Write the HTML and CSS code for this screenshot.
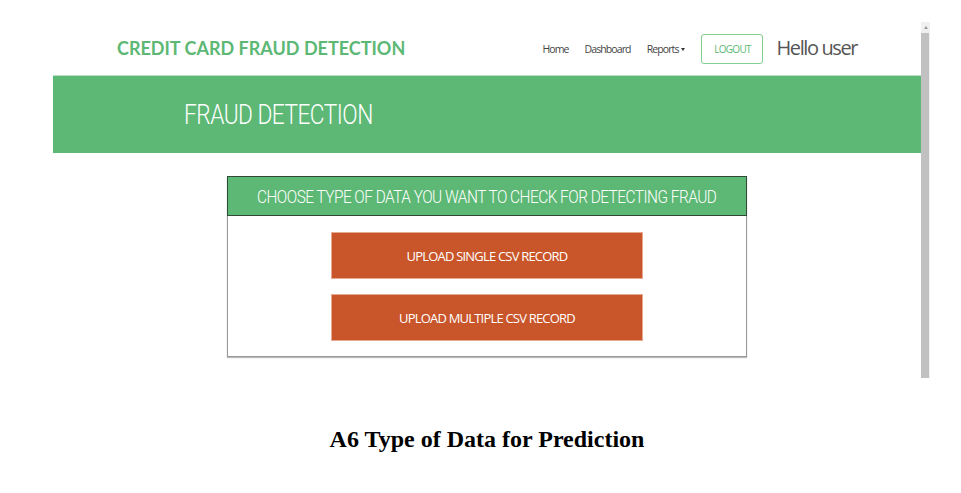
FILE: index.html
```html
<!DOCTYPE html>
<html>
<head>
<meta charset="utf-8">
<link rel="stylesheet" href="styles.css">
</head>
<body>
<div class="page">
  <div class="window">
    <div class="screen">
      <nav class="nav">
        <div class="brand">CREDIT CARD FRAUD DETECTION</div>
        <div class="menu">
          <a class="link">Home</a>
          <a class="link">Dashboard</a>
          <a class="link">Reports<span class="caret"></span></a>
          <button class="logout">LOGOUT</button>
          <span class="hello">Hello user</span>
        </div>
      </nav>
      <div class="band">
        <h1 class="band-title">FRAUD DETECTION</h1>
      </div>
      <div class="content">
        <div class="box">
          <div class="box-head"><span class="box-head-text">CHOOSE TYPE OF DATA YOU WANT TO CHECK FOR DETECTING FRAUD</span></div>
          <div class="box-body">
            <button class="upload">UPLOAD SINGLE CSV RECORD</button>
            <button class="upload">UPLOAD MULTIPLE CSV RECORD</button>
          </div>
        </div>
      </div>
    </div>
    <div class="scrollbar">
      <div class="arrow"><span class="arrow-tri"></span></div>
      <div class="thumb"></div>
    </div>
  </div>
  <p class="caption">A6 Type of Data for Prediction</p>
</div>
</body>
</html>
```
FILE: styles.css
```css
* { box-sizing: border-box; }
html, body { margin: 0; background: #fff; }
.page { padding: 22px 0 0 53px; width: 961px; height: 493px; }
.window { display: flex; height: 356px; }
.screen { width: 868px; height: 356px; display: flex; flex-direction: column; background: #fff; }
.nav { height: 53px; display: flex; align-items: center; justify-content: space-between; padding: 0 64px 0 64px; }
.brand { font-family: "Lato", sans-serif; font-weight: 700; font-size: 18px; color: #5cb874; margin-top: -2px; }
.menu { display: flex; align-items: center; }
.link { font-family: "Open Sans", sans-serif; font-size: 10.5px; color: #444; margin-right: 16px; letter-spacing: -0.9px; }
.caret { display: inline-block; width: 0; height: 0; border-left: 2.5px solid transparent; border-right: 2.5px solid transparent; border-top: 3px solid #333; vertical-align: middle; margin-left: 3px; }
.logout { width: 62px; height: 30px; border: 1.5px solid #7fd08f; border-radius: 3px; background: #fff; color: #5cb874; font-family: "Open Sans", sans-serif; font-size: 10px; letter-spacing: -0.7px; padding: 0; margin-right: 13px; }
.hello { font-family: "Open Sans", sans-serif; font-size: 20px; color: #555; letter-spacing: -1.4px; margin-top: -3px; }
.band { height: 78px; background: #5cb874; border-top: 1px solid #b7e1c1; display: flex; align-items: center; padding-left: 131px; }
.band-title { margin: 0; font-family: "Roboto", sans-serif; font-weight: 300; font-size: 27px; color: #fff; letter-spacing: -0.6px; transform: scaleX(0.84); transform-origin: left center; white-space: nowrap; }
.content { flex: 1; padding: 23px 0 0 174px; }
.box { width: 520px; height: 181px; border: 1px solid #999; border-top: none; box-shadow: 0 1px 1px #bbb; }
.box-head { height: 40px; background: #5cb874; border: 1px solid #2f4a36; margin: 0 -1px; display: flex; align-items: center; justify-content: center; }
.box-head-text { font-family: "Roboto", sans-serif; font-weight: 300; font-size: 18px; color: #fff; letter-spacing: -0.6px; white-space: nowrap; transform: scaleX(0.855); }
.box-body { display: flex; flex-direction: column; align-items: center; gap: 15px; padding-top: 16px; }
.upload { width: 312px; height: 47px; background: #c9552a; border: 1px solid #e7a98f; color: #fff; font-family: "Open Sans", sans-serif; font-size: 13px; letter-spacing: -0.8px; padding: 0; }
.scrollbar { width: 9px; display: flex; flex-direction: column; background: #f0f0f0; }
.arrow { height: 11px; display: flex; align-items: center; justify-content: center; background: #f0f0f0; }
.arrow-tri { width: 0; height: 0; border-left: 2.5px solid transparent; border-right: 2.5px solid transparent; border-bottom: 3px solid #999; }
.thumb { flex: 1; background: #c1c1c1; margin: 0 1px 0 0; }
.caption { margin: 48px 0 0 0; width: 868px; text-align: center; font-family: "Liberation Serif", serif; font-weight: 700; font-size: 24px; color: #000; }
```
